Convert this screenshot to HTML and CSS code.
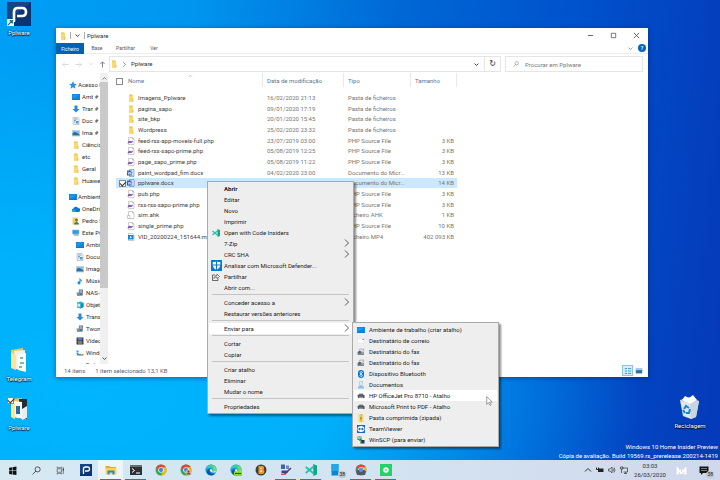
FILE: index.html
```
<!DOCTYPE html>
<html lang="pt">
<head>
<meta charset="utf-8">
<title>Pplware</title>
<link rel="stylesheet" href="styles.css">
</head>
<body>
<svg class="defs" aria-hidden="true">
  <symbol id="folder" viewBox="0 0 16 16"><path d="M4 1h6l2 2v12H4z" fill="#e9b93e"/><path d="M5 3h7v12H4V2z" fill="#fbd96c"/><path d="M10 10h3v5h-3z" fill="#f2c64c"/></symbol>
  <symbol id="php" viewBox="0 0 16 16"><path d="M3 1h8l3 3v11H3z" fill="#fff" stroke="#9b9b9b"/><path d="M11 1v3h3" fill="none" stroke="#9b9b9b"/><path d="M1 13c1-5 4-6 6-5s4 0 5-1c0 4-3 5-5 5s-4 0-6 1z" fill="#8557b0"/></symbol>
  <symbol id="file" viewBox="0 0 16 16"><path d="M3 1h8l3 3v11H3z" fill="#fff" stroke="#9b9b9b"/><path d="M11 1v3h3" fill="none" stroke="#9b9b9b"/><path d="M1 9h5v6H1z" fill="#fff" stroke="#999"/></symbol>
  <symbol id="docx" viewBox="0 0 16 16"><path d="M5 1h9v14H5z" fill="#fff" stroke="#2b66b8"/><path d="M8 4h5M8 7h5M8 10h5M8 13h5" stroke="#4a88d4"/><path d="M0 3h9v10H0z" fill="#1c5bb5"/><path d="M2 5l1.500 6L5 6l1.500 5L8 5" fill="none" stroke="#fff" stroke-width="1.200"/></symbol>
  <symbol id="video" viewBox="0 0 16 16"><path d="M3 1h8l3 3v11H3z" fill="#fff" stroke="#9b9b9b"/><path d="M2 4h11v9H2z" fill="#1686d9"/><path d="M6 6l4 2.500-4 2.500z" fill="#fff"/></symbol>
  <symbol id="star" viewBox="0 0 16 16"><path d="M8 0l2.300 5.300 5.700.5-4.300 3.800L13 15.500l-5-3-5 3 1.300-5.900L0 5.800l5.700-.5z" fill="#2694e6"/></symbol>
  <symbol id="desktop" viewBox="0 0 16 16"><path d="M0 2h16v12H0z" fill="#0a7cd0"/><path d="M1 3h14v9H1z" fill="#1b9bf0"/><path d="M1 12L15 3v9z" fill="#0d87de"/></symbol>
  <symbol id="down" viewBox="0 0 16 16"><path d="M5 1h6v7h4l-7 7-7-7h4z" fill="#2b88d8"/></symbol>
  <symbol id="docs" viewBox="0 0 16 16"><path d="M2 1h10l2 2v12H2z" fill="#eef4f8" stroke="#8ba0b2"/><path d="M4 4h7M4 7h4M4 10h3" stroke="#5b87ad" stroke-width="1.500"/><path d="M8 8h5v5H8z" fill="#4b9bd6"/></symbol>
  <symbol id="pics" viewBox="0 0 16 16"><path d="M0 3h16v11H0z" fill="#fff" stroke="#9aa9b5"/><path d="M1 4h14v5H1z" fill="#76c3ee"/><path d="M1 8l5-2 9 4v3H1z" fill="#2c6f9c"/></symbol>
  <symbol id="cloud" viewBox="0 0 16 16"><path d="M3 14a3.500 3.500 0 0 1 0-7 5 5 0 0 1 9-1 4 4 0 0 1 1 8z" fill="#0f77d0"/><path d="M0 11c1-4 6-4 8 3H3c-2 0-3-1-3-3z" fill="#2aa0ea"/></symbol>
  <symbol id="user" viewBox="0 0 16 16"><path d="M1 1h10v14H1z" fill="#efcf62"/><circle cx="9" cy="6" r="3" fill="#93673d"/><path d="M4 15c0-7 10-7 10 0z" fill="#3d8348"/></symbol>
  <symbol id="pc" viewBox="0 0 16 16"><path d="M1 2h13v8H1z" fill="#2d9fe8" stroke="#8db6d0"/><path d="M4 13h11l-3-2H3z" fill="#75828c"/></symbol>
  <symbol id="music" viewBox="0 0 16 16"><path d="M7 1c1 4 6 4 5 9-1-3-3-3-3-3v5a3 3 0 1 1-2-3z" fill="#188be2"/></symbol>
  <symbol id="nas" viewBox="0 0 16 16"><path d="M6 1h8l-1 12H5z" fill="#607180"/><path d="M7 3h5M7 5h5M7 7h5" stroke="#d8e2ea"/><path d="M1 7h6v7H2z" fill="#8193a0"/><circle cx="11" cy="11" r="2" fill="#2e84c5"/></symbol>
  <symbol id="cube" viewBox="0 0 16 16"><path d="M2 3l8-2 5 3v8l-6 3-7-2z" fill="#19b3d6"/><path d="M3 5l6 1v6l-6-1z" fill="#c6f4fb"/><path d="M9 6l6-2v8l-6 3z" fill="#0794bd"/></symbol>
  <symbol id="film" viewBox="0 0 16 16"><path d="M1 1h14v14H1z" fill="#29344d"/><path d="M4 2h8v5H4z" fill="#5779c5"/><path d="M4 8h8v6H4z" fill="#887b57"/><path d="M2 2v12M14 2v12" stroke="#d5d9e2" stroke-dasharray="1.500"/></symbol>
  <symbol id="drive" viewBox="0 0 16 16"><path d="M1 3h4v3H1zM1 7h4v3H1z" fill="#1ba4e8"/><path d="M2 10h13v3H2z" fill="#6d7881"/><path d="M10 11h3v1h-3z" fill="#d7edf2"/></symbol>
  <symbol id="pin" viewBox="0 0 16 16"><path d="M9 1l6 6-2 1-3 3-1 3-3-3-5 4 4-5-3-3 3-1 3-3z" fill="#69747c"/></symbol>
  <symbol id="magnifier" viewBox="0 0 16 16"><circle cx="10" cy="6" r="4.500" fill="none" stroke="currentColor" stroke-width="1.400"/><path d="M7 9l-6 6" stroke="currentColor" stroke-width="1.400"/></symbol>
  <symbol id="chevron" viewBox="0 0 16 16"><path d="M4 1l7 7-7 7" fill="none" stroke="currentColor" stroke-width="1.600"/></symbol>
  <symbol id="chevdown" viewBox="0 0 16 16"><path d="M2 5l6 6 6-6" fill="none" stroke="currentColor" stroke-width="3"/></symbol>
  <symbol id="chevup" viewBox="0 0 16 16"><path d="M2 11l6-6 6 6" fill="none" stroke="currentColor" stroke-width="2"/></symbol>
  <symbol id="arrow" viewBox="0 0 16 16"><path d="M15 8H2M7 3L2 8l5 5" fill="none" stroke="currentColor" stroke-width="1.600"/></symbol>
  <symbol id="vscode" viewBox="0 0 16 16"><path d="M11 0l5 2v12l-5 2z" fill="#13a58b"/><path d="M1 4l11 9M1 12L12 3" stroke="#24bfa5" stroke-width="2.400"/></symbol>
  <symbol id="defender" viewBox="0 0 20 20"><path d="M0 0h20v20H0z" fill="#0a78d4"/><path d="M10 2c2 2 5 2 7 2 0 7-1 11-7 14C4 15 3 11 3 4c2 0 5 0 7-2z" fill="#fff"/><path d="M10 2v16M3 9h14" stroke="#0a78d4" stroke-width="2"/></symbol>
  <symbol id="share" viewBox="0 0 16 16"><path d="M6 4H1v11h11v-4" fill="none" stroke="#333" stroke-width="1.400"/><path d="M4 11c0-4 3-6 6-6V2l5 5-5 4V8c-3 0-5 1-6 3z" fill="#fff" stroke="#333" stroke-width="1.200"/></symbol>
  <symbol id="mail" viewBox="0 0 16 16"><path d="M1 3h14v10H1z" fill="#fafafa" stroke="#ccd1d5" stroke-dasharray="2 1"/><path d="M11 4h3v2h-3z" fill="#5b9fd4"/></symbol>
  <symbol id="fax" viewBox="0 0 16 16"><path d="M5 2h9l-2 6H4z" fill="#dbe1e5" stroke="#87929a"/><path d="M1 8h13v6H1z" fill="#7c8993"/><path d="M3 6h5l-1 5H2z" fill="#4e5f6c"/><path d="M9 10h4" stroke="#fff"/></symbol>
  <symbol id="bluetooth" viewBox="0 0 16 16"><rect x="2" width="12" height="16" rx="6" fill="#0b77d5"/><path d="M5 5l6 6-3 3V2l3 3-6 6" fill="none" stroke="#fff" stroke-width="1.300"/></symbol>
  <symbol id="person" viewBox="0 0 16 16"><path d="M5 1h6v8H5z" fill="#d8eaf5" stroke="#91b8d0"/><path d="M2 15v-3l4-3h4l4 3v3z" fill="#83c3e9"/></symbol>
  <symbol id="printer" viewBox="0 0 16 16"><path d="M4 3h8v3H4z" fill="#899198"/><path d="M1 6l3-1h9l2 2v5H2z" fill="#4d555b"/><path d="M4 9h8v3H4z" fill="#8f989d"/></symbol>
  <symbol id="zip" viewBox="0 0 16 16"><path d="M3 0h10v16H3z" fill="#f8d768"/><path d="M8 0v16" stroke="#ae9340" stroke-width="2" stroke-dasharray="1"/><path d="M6 6h4v5H6z" fill="#b29b59"/></symbol>
  <symbol id="teamviewer" viewBox="0 0 16 16"><path d="M0 0h16v16H0z" fill="#1769c9"/><ellipse cx="8" cy="8" rx="7" ry="6" fill="#fff"/><path d="M2 8l4-3v2h4V5l4 3-4 3V9H6v2z" fill="#1769c9"/></symbol>
  <symbol id="winscp" viewBox="0 0 16 16"><path d="M1 1h8v7H1z" fill="#566c88"/><path d="M2 2h6v4H2z" fill="#9bc5df"/><path d="M7 8h8v7H7z" fill="#263643"/><path d="M5 6l5 7M5 10V6h4" stroke="#32b84b" stroke-width="2"/></symbol>
  <symbol id="pplogo" viewBox="0 0 24 24"><path d="M0 0h24v24H0z" fill="#0b3572"/><path d="M0 0h24L0 20z" fill="#174482"/><path d="M7 20V10q0-4 4-4h4q4 0 4 4t-4 4h-5" fill="none" stroke="#fff" stroke-width="2.600"/></symbol>
  <symbol id="chrome" viewBox="0 0 24 24"><circle cx="12" cy="12" r="11" fill="#34a853"/><path d="M2.500 6.500A11 11 0 0 1 21.500 6.500L12 7l-4.500 8z" fill="#ea4335"/><path d="M21.500 6.500A11 11 0 0 1 12 23l4.500-8.500L12 7z" fill="#fbbc04"/><circle cx="12" cy="12" r="5.500" fill="#fff"/><circle cx="12" cy="12" r="4.300" fill="#4285f4"/></symbol>
  <symbol id="edge" viewBox="0 0 24 24"><circle cx="12" cy="12" r="11" fill="#1189d4"/><path d="M1 11C2-2 22-1 23 10c0 5-5 6-9 4 3-3 0-6-4-6-5 0-8 3-9 3z" fill="#35c8bd"/><path d="M14 2c6 1 9 5 9 9 0 4-5 5-9 3 3-3 3-8 0-12z" fill="#6bdc67"/><path d="M9 10c-2 5 1 10 10 10-5 5-15 2-15-4 0-3 2-5 5-6z" fill="#0b52a7"/><path d="M11 10c-3 5 2 8 10 7l2-5c-1 3-6 4-9 2 1-2 0-4-3-4z" fill="#e5f4fc"/></symbol>
</svg>

<main class="desktop">
  <a class="shortcut app" href="#pplware"><svg class="logo"><use href="#pplogo"/></svg><svg class="link-arrow" viewBox="0 0 8 8"><path d="M0 0h8v8H0z" fill="#fff"/><path d="M1 7l5-5M3 2h3v3" stroke="#176bb0" stroke-width="1.500" fill="none"/></svg><span>Pplware</span></a>
  <a class="shortcut telegram" href="#telegram"><svg viewBox="0 0 20 24"><path d="M2 2l12-2v22L2 20z" fill="#e7c361"/><path d="M5 3l11-1v21l-9-2z" fill="#f1f2ed"/><path d="M9 7l8-2v19l-8-2z" fill="#fff"/><path d="M11 10h3M11 15h4M10 19h3" stroke="#76bdaa" stroke-width="2"/><path d="M2 4l5 3v15l-5-2z" fill="#ffe397"/></svg><span>Telegram</span></a>
  <a class="shortcut folder" href="#folder"><svg viewBox="0 0 20 24"><path d="M2 2l11-1v20L2 20z" fill="#e8c365"/><path d="M10 2h8v20h-8z" fill="#222d34"/><path d="M5 4l8 1v17l-8-2z" fill="#f5f7f9"/><path d="M7 9h4v8H7z" fill="#2368b4"/><path d="M13 12l5-3v12l-5 2z" fill="#e9edf0"/><path d="M2 4l4 3v15l-4-2z" fill="#ffe397"/></svg><span>Pplware</span></a>
  <input class="shortcut-check" type="checkbox" checked aria-label="Pplware">
  <a class="shortcut bin" href="#bin"><svg viewBox="0 0 22 24"><path d="M1 5l19 1-3 16-5 2-8-3z" fill="#dfe7ed"/><path d="M1 5l10-3 9 4-9 3z" fill="#b7c7d3"/><path d="M3 5l3-4 4 2 4-3 4 5-7 4z" fill="#fafcfd"/><path d="M11 9l9-3-3 16-5 2z" fill="#c9d5de"/><path d="M5 14l2-3 3 2M11 14l-1 4H7M6 18l-2-3" fill="none" stroke="#1687d3" stroke-width="2"/></svg><span>Reciclagem</span></a>

  <section class="window">
    <header class="titlebar">
      <svg class="icon"><use href="#folder"/></svg><i class="bar"></i>
      <svg class="tiny"><use href="#chevdown"/></svg><i class="bar"></i>
      <h1>Pplware</h1>
      <div class="controls">
        <button aria-label="Minimizar"><svg viewBox="0 0 8 8"><path d="M1 4h6" stroke="#555"/></svg></button>
        <button aria-label="Maximizar"><svg viewBox="0 0 8 8"><path d="M1.500 1.500h5v5h-5z" fill="none" stroke="#666"/></svg></button>
        <button aria-label="Fechar"><svg viewBox="0 0 8 8"><path d="M1 1l6 6M7 1L1 7" stroke="#555"/></svg></button>
      </div>
    </header>
    <div class="tabs">
      <button class="tab file">Ficheiro</button><button class="tab">Base</button><button class="tab share-tab">Partilhar</button><button class="tab">Ver</button>
      <div class="help"><svg class="tiny"><use href="#chevdown"/></svg><button aria-label="Ajuda">?</button></div>
    </div>
    <div class="navbar">
      <div class="arrows">
        <button aria-label="Retroceder"><svg><use href="#arrow"/></svg></button>
        <button aria-label="Avançar"><svg class="forward"><use href="#arrow"/></svg></button>
        <button aria-label="Recentes"><svg class="recent"><use href="#chevdown"/></svg></button>
        <button class="active" aria-label="Subir"><svg class="up"><use href="#arrow"/></svg></button>
      </div>
      <div class="address"><svg class="icon"><use href="#folder"/></svg><svg class="crumb"><use href="#chevron"/></svg><a href="#pplware">Pplware</a><svg class="crumb open"><use href="#chevdown"/></svg></div>
      <button class="refresh" aria-label="Atualizar">↻</button>
      <div class="search"><label for="q" aria-label="Procurar"><svg><use href="#magnifier"/></svg></label><input id="q" type="search" placeholder="Procurar em Pplware"></div>
    </div>
    <div class="content">
      <nav class="tree">
        <a class="root" href="#t"><svg><use href="#star"/></svg>Acesso Rápido</a>
        <a class="pinned" href="#t"><svg><use href="#desktop"/></svg><span>Ambiente</span><svg class="pin"><use href="#pin"/></svg></a>
        <a class="pinned" href="#t"><svg><use href="#down"/></svg><span>Transf</span><svg class="pin"><use href="#pin"/></svg></a>
        <a class="pinned" href="#t"><svg><use href="#docs"/></svg><span>Docum</span><svg class="pin"><use href="#pin"/></svg></a>
        <a class="pinned" href="#t"><svg><use href="#pics"/></svg><span>Imagens</span><svg class="pin"><use href="#pin"/></svg></a>
        <a href="#t"><svg><use href="#folder"/></svg>Ciência</a>
        <a href="#t"><svg><use href="#folder"/></svg>etc</a>
        <a href="#t"><svg><use href="#folder"/></svg>Geral</a>
        <a href="#t"><svg><use href="#folder"/></svg>Huawei</a>
        <a class="root second" href="#t"><svg><use href="#desktop"/></svg>Ambiente</a>
        <a href="#t"><svg><use href="#cloud"/></svg>OneDrive</a>
        <a href="#t"><svg><use href="#user"/></svg>Pedro S</a>
        <a href="#t"><svg><use href="#pc"/></svg>Este PC</a>
        <a class="child" href="#t"><svg><use href="#desktop"/></svg>Ambiente</a>
        <a class="child" href="#t"><svg><use href="#docs"/></svg>Documentos</a>
        <a class="child" href="#t"><svg><use href="#pics"/></svg>Imagens</a>
        <a class="child" href="#t"><svg><use href="#music"/></svg>Música</a>
        <a class="child" href="#t"><svg><use href="#nas"/></svg>NAS-PPL</a>
        <a class="child" href="#t"><svg><use href="#cube"/></svg>Objetos</a>
        <a class="child" href="#t"><svg><use href="#down"/></svg>Transf</a>
        <a class="child" href="#t"><svg><use href="#nas"/></svg>Twonky</a>
        <a class="child" href="#t"><svg><use href="#film"/></svg>Vídeos</a>
        <a class="child" href="#t"><svg><use href="#drive"/></svg>Windows</a>
        <a class="child" href="#t"><svg></svg>Data</a>
      </nav>
      <div class="scrollbar"><svg><use href="#chevup"/></svg><div class="thumb"></div><svg><use href="#chevdown"/></svg></div>
      <div class="listing">
        <table>
          <colgroup><col class="c-check"><col class="c-name"><col class="c-date"><col class="c-type"><col class="c-size"></colgroup>
          <thead><tr><th><input type="checkbox" aria-label="Selecionar tudo"></th><th class="sorted">Nome<svg><use href="#chevup"/></svg></th><th>Data de modificação</th><th>Tipo</th><th>Tamanho</th></tr></thead>
          <tbody>
            <tr><td></td><td><svg><use href="#folder"/></svg>Imagens_Pplware</td><td>16/02/2020 21:13</td><td>Pasta de ficheiros</td><td></td></tr>
            <tr><td></td><td><svg><use href="#folder"/></svg>pagina_sapo</td><td>09/01/2020 17:19</td><td>Pasta de ficheiros</td><td></td></tr>
            <tr><td></td><td><svg><use href="#folder"/></svg>site_bkp</td><td>20/01/2020 15:45</td><td>Pasta de ficheiros</td><td></td></tr>
            <tr><td></td><td><svg><use href="#folder"/></svg>Wordpress</td><td>25/02/2020 23:32</td><td>Pasta de ficheiros</td><td></td></tr>
            <tr><td></td><td><svg><use href="#php"/></svg>feed-rss-app-moveis-full.php</td><td>23/07/2019 03:00</td><td>PHP Source File</td><td>3 KB</td></tr>
            <tr><td></td><td><svg><use href="#php"/></svg>feed-rss-sapo-prime.php</td><td>05/08/2019 12:25</td><td>PHP Source File</td><td>3 KB</td></tr>
            <tr><td></td><td><svg><use href="#php"/></svg>page_sapo_prime.php</td><td>05/08/2019 11:22</td><td>PHP Source File</td><td>3 KB</td></tr>
            <tr><td></td><td><svg><use href="#docx"/></svg>paint_wordpad_fim.docx</td><td>04/02/2020 23:00</td><td>Documento do Micr...</td><td>13 KB</td></tr>
            <tr class="selected"><td><input type="checkbox" checked aria-label="pplware.docx"></td><td><svg><use href="#docx"/></svg>pplware.docx</td><td>25/03/2020 23:32</td><td>Documento do Micr...</td><td>14 KB</td></tr>
            <tr><td></td><td><svg><use href="#php"/></svg>pub.php</td><td></td><td>PHP Source File</td><td>3 KB</td></tr>
            <tr><td></td><td><svg><use href="#php"/></svg>rss-rss-sapo-prime.php</td><td></td><td>PHP Source File</td><td>3 KB</td></tr>
            <tr><td></td><td><svg><use href="#file"/></svg>sim.ahk</td><td></td><td>Ficheiro AHK</td><td>1 KB</td></tr>
            <tr><td></td><td><svg><use href="#php"/></svg>single_prime.php</td><td></td><td>PHP Source File</td><td>10 KB</td></tr>
            <tr><td></td><td><svg><use href="#video"/></svg>VID_20200224_151644.mp4</td><td></td><td>Ficheiro MP4</td><td>402 093 KB</td></tr>
          </tbody>
        </table>
      </div>
    </div>
    <footer class="status"><span>14 itens</span><span>1 item selecionado 13,1 KB</span>
      <div class="views"><button class="on" aria-label="Detalhes"><svg viewBox="0 0 10 10"><path d="M1 2h3M5 2h4M1 5h3M5 5h4M1 8h3M5 8h4" stroke="#3182ae"/></svg></button><button aria-label="Mosaicos"><svg viewBox="0 0 10 10"><path d="M1 2h8v6H1z" fill="#2b6ea5"/><path d="M1 2h8v2H1z" fill="#9bd1ed"/></svg></button></div>
    </footer>
  </section>

  <div class="menu context">
    <button><b>Abrir</b></button><button>Editar</button><button>Novo</button><button>Imprimir</button>
    <button><svg><use href="#vscode"/></svg>Open with Code Insiders</button>
    <button>7-Zip<svg class="more"><use href="#chevron"/></svg></button>
    <button>CRC SHA<svg class="more"><use href="#chevron"/></svg></button>
    <button><svg class="large"><use href="#defender"/></svg>Analisar com Microsoft Defender...</button>
    <button><svg><use href="#share"/></svg>Partilhar</button>
    <button>Abrir com...</button><hr>
    <button>Conceder acesso a<svg class="more"><use href="#chevron"/></svg></button><button>Restaurar versões anteriores</button><hr>
    <div class="parent">
      <button class="hot">Enviar para<svg class="more"><use href="#chevron"/></svg></button>
      <div class="menu submenu">
        <button><svg><use href="#desktop"/></svg>Ambiente de trabalho (criar atalho)</button>
        <button><svg><use href="#mail"/></svg>Destinatário de correio</button>
        <button><svg><use href="#fax"/></svg>Destinatário do fax</button>
        <button><svg><use href="#fax"/></svg>Destinatário do fax</button>
        <button><svg><use href="#bluetooth"/></svg>Dispositivo Bluetooth</button>
        <button><svg><use href="#person"/></svg>Documentos</button>
        <button class="hot"><svg><use href="#printer"/></svg>HP OfficeJet Pro 8710 - Atalho</button>
        <button><svg><use href="#printer"/></svg>Microsoft Print to PDF - Atalho</button>
        <button><svg><use href="#zip"/></svg>Pasta comprimida (zipada)</button>
        <button><svg><use href="#teamviewer"/></svg>TeamViewer</button>
        <button><svg><use href="#winscp"/></svg>WinSCP (para enviar)</button>
      </div>
    </div><hr>
    <button>Cortar</button><button>Copiar</button><hr>
    <button>Criar atalho</button><button>Eliminar</button><button>Mudar o nome</button><hr>
    <button>Propriedades</button>
  </div>
  <svg class="cursor" viewBox="0 0 12 18"><path d="M1 1v14l3-3 3 5 2-1-3-5h5z" fill="#fff" stroke="#555"/></svg>
  <p class="watermark">Windows 10 Home Insider Preview<br>Cópia de avaliação. Build 19569.rs_prerelease.200214-1419</p>
</main>

<footer class="taskbar">
  <div class="system">
    <button aria-label="Iniciar"><svg viewBox="0 0 16 16"><path d="M2 3l5-1v6H2zM8 2l7-1v7H8zM2 9h5v6l-5-1zM8 9h7v7l-7-1z" fill="#111"/></svg></button>
    <button aria-label="Procurar"><svg><use href="#magnifier"/></svg></button>
    <button aria-label="Vista de tarefas"><svg viewBox="0 0 16 16"><path d="M2 5h8v6H2zM2 1v2h8V1M2 15v-2h8v2M13 2v12" fill="none" stroke="#333"/><path d="M12 5h2v3h-2z" fill="#333"/></svg></button>
  </div>
  <div class="apps">
    <button aria-label="Pplware"><svg><use href="#pplogo"/></svg></button>
    <button class="current running" aria-label="Explorador"><svg viewBox="0 0 24 24"><path d="M1 4h8l2 2h11v4H1z" fill="#e6a928"/><path d="M1 8h22v13H1z" fill="#ffd65b"/><path d="M5 13h14v8h-4v-4H9v4H5z" fill="#2788cc"/></svg></button>
    <button class="running" aria-label="Terminal"><svg viewBox="0 0 24 24"><path d="M0 2h24v20H0z" fill="#2e3133"/><path d="M0 2h24v4H0z" fill="#686d70"/><path d="M4 9l5 4-5 4M12 18h8" fill="none" stroke="#fff" stroke-width="2"/></svg></button>
    <button aria-label="Chrome"><svg><use href="#chrome"/></svg></button>
    <button aria-label="Chrome perfil"><svg viewBox="0 0 24 24"><use href="#chrome"/><circle cx="17" cy="17" r="6" fill="#cbb6a5"/><circle cx="17" cy="15" r="2" fill="#714537"/><path d="M13 21c0-5 8-5 8 0z" fill="#9e3c42"/></svg></button>
    <button aria-label="Edge"><svg><use href="#edge"/></svg></button>
    <button aria-label="Edge Canary"><svg viewBox="0 0 24 24"><use href="#edge"/><path d="M8 15h16v9H8z" fill="#85d62e"/><path d="M10 19h12" stroke="#355e1a" stroke-width="2"/></svg></button>
    <button aria-label="Ferramenta"><svg viewBox="0 0 24 24"><circle cx="12" cy="12" r="11" fill="#383e40"/><path d="M7 4h8c4 1 4 5 2 7 3 2 2 9-2 9H7z" fill="#f6952d"/><path d="M11 8h3v2h-3zM11 13h3v3h-3z" fill="#fff"/></svg></button>
    <button class="running" aria-label="Editor"><svg viewBox="0 0 24 24"><path d="M2 1h18v18H2z" fill="#dfe8f5"/><path d="M2 1h8v9H2z" fill="#3c62ad"/><path d="M12 3h6v7h-6z" fill="#6f86b8"/><path d="M3 13h12v5H3z" fill="#2c4a8c"/><path d="M5 22L21 7l2 2L10 22z" fill="#54406e"/><path d="M2 19h8v3H2z" fill="#d65358"/></svg></button>
    <button class="running" aria-label="Code Insiders"><svg><use href="#vscode"/></svg></button>
    <button aria-label="Telefone"><svg viewBox="0 0 24 24"><path d="M3 0h14v23H3z" fill="#0786d2"/><path d="M3 0h14v14H3z" fill="#25a6e6"/></svg><span class="count">38</span></button>
    <button class="running" aria-label="Chrome janela"><svg viewBox="0 0 24 24"><use href="#chrome"/><path d="M2 14l7-3 3 5 4-5 6 3-2 8H4z" fill="#505966"/><circle cx="12" cy="12" r="4" fill="#5594e6"/></svg></button>
    <button class="running" aria-label="Captura"><svg viewBox="0 0 24 24"><path d="M0 0h24v24H0z" fill="#20d467"/><circle cx="12" cy="12" r="4" fill="#8be9b0" stroke="#fff" stroke-width="3"/></svg></button>
  </div>
  <div class="tray">
    <button aria-label="Mostrar ícones"><svg><use href="#chevup"/></svg></button>
    <button aria-label="Bateria"><svg viewBox="0 0 16 16"><path d="M4 5h11v7H4z" fill="#222"/><path d="M1 3v4h4V3" fill="none" stroke="#222" stroke-width="2"/></svg></button>
    <button aria-label="Volume"><svg viewBox="0 0 16 16"><path d="M1 6h3l4-4v12l-4-4H1zM10 5q2 3 0 6M12 3q4 5 0 10" fill="none" stroke="#333" stroke-width="1.300"/></svg></button>
    <button aria-label="Rede"><svg viewBox="0 0 16 16"><path d="M4 4h11v8H7M8 15h6M11 12v3M1 2h5v4H1zM3 6v8" fill="none" stroke="#333" stroke-width="1.400"/></svg></button>
  </div>
  <time class="clock">03:03<br>26/03/2020</time>
  <button class="brand" aria-label="Monitor"><svg viewBox="0 0 24 20"><path d="M1 1l5 4v14H1zM23 1l-5 4v14h5zM8 8h3v10H8zM13 8h3v10h-3zM6 8l6 6 6-6v4l-6 5-6-5z" fill="#fff"/></svg></button>
  <button class="notices" aria-label="Notificações"><svg viewBox="0 0 20 18"><path d="M1 1h18v13H8l-4 4v-4H1z" fill="#161616"/><path d="M4 5h12M4 9h12" stroke="#dce3ee"/></svg><span class="count">38</span></button>
</footer>
</body>
</html>
```
FILE: styles.css
```
* { box-sizing: border-box; }
body {
  margin: 0;
  height: 100vh;
  display: flex;
  flex-direction: column;
  overflow: hidden;
  font: 6px/8px Roboto, "Open Sans", sans-serif;
  color: #303030;
}
button { font: inherit; color: inherit; border: 0; padding: 0; background: none; display: flex; align-items: center; justify-content: center; }
a { color: inherit; text-decoration: none; }
svg { display: block; flex: none; width: 8px; height: 8px; }
.defs { position: absolute; width: 0; height: 0; }
input[type="checkbox"] {
  appearance: none;
  display: block;
  position: relative;
  width: 7px;
  height: 7px;
  margin: 0;
  border: 1px solid #8a8a8a;
  background: #fff;
}
input[type="checkbox"]:checked::after {
  content: "";
  position: absolute;
  left: 0;
  top: 0;
  width: 5px;
  height: 3px;
  border: solid #333;
  border-width: 0 0 1px 1px;
  transform: rotate(-45deg);
}

/* Desktop */
.desktop {
  flex: 1;
  min-height: 0;
  position: relative;
  background:
    radial-gradient(ellipse at 10% 85%, #00b4fd 0%, #00b0fb 28%, rgba(0, 160, 245, 0) 62%),
    linear-gradient(96deg, #009ff5 0%, #0096ef 25%, #0068d5 52%, #0052cd 75%, #0539b8 100%);
}
.shortcut {
  position: absolute;
  display: flex;
  flex-direction: column;
  align-items: center;
  gap: 3px;
  width: 36px;
  color: #fff;
  text-shadow: 0 0 2px #000, 0 1px 1px #000;
}
.shortcut > svg { width: 20px; height: 24px; }
.shortcut .logo { width: 24px; height: 24px; }
.app { left: 1px; top: 2px; }
.shortcut .link-arrow { position: absolute; left: 6px; top: 17px; width: 7px; height: 7px; }
.telegram { left: 1px; top: 348px; }
.folder { left: 1px; top: 397px; }
.shortcut-check.shortcut-check { position: absolute; left: 7px; top: 397px; }
.bin { right: 12px; bottom: 30px; }
.shortcut.bin svg { width: 22px; }
.watermark { position: absolute; right: 2px; bottom: 0; margin: 0; line-height: 9px; text-align: right; color: #fff; }

/* Explorer window */
.window {
  position: absolute;
  left: 56px;
  right: 72px;
  top: 28px;
  bottom: 83px;
  display: flex;
  flex-direction: column;
  background: #fff;
  box-shadow: 0 1px 5px rgba(0, 30, 80, .5);
}
.titlebar { height: 15px; display: flex; align-items: center; gap: 4px; padding-left: 3px; }
.titlebar .icon { margin-right: -1px; }
.titlebar h1 { margin: 0; font: inherit; margin-left: -2px; }
.bar { width: 1px; height: 7px; background: #aaa; }
.tiny { width: 5px; height: 5px; }
.controls { display: flex; margin-left: auto; height: 100%; }
.controls button { width: 23px; }
.controls svg { width: 7px; height: 7px; }
.tabs { height: 11px; display: flex; border-bottom: 1px solid #eee; color: #555; font-size: 5px; }
.tab { width: 26px; }
.tab.file { width: 28px; background: #0063b1; color: #fff; margin-bottom: -1px; }
.share-tab { width: 31px; }
.help { display: flex; align-items: center; gap: 5px; margin-left: auto; padding-right: 2px; color: #999; }
.help button { width: 8px; height: 8px; border-radius: 50%; background: #0067c0; color: #fff; font-weight: bold; }
.navbar { display: flex; height: 19px; padding: 2px 5px 1px 3px; }
.arrows { display: flex; width: 50px; color: #ccc; align-items: center; justify-content: space-between; padding: 0 3px; }
.arrows svg { width: 7px; height: 7px; }
.arrows .recent { width: 4px; height: 4px; }
.arrows .active { color: #555; }
.forward { transform: rotate(180deg); }
.up { transform: rotate(90deg); }
.address { flex: 1; display: flex; align-items: center; gap: 4px; border: 1px solid #e5e5e5; padding-right: 5px; }
.crumb { width: 5px; height: 5px; }
.open { margin-left: auto; }
.refresh { width: 16px; border: 1px solid #e5e5e5; border-left: 0; font: 8px/8px "DejaVu Sans", sans-serif; }
.search { width: 138px; margin-left: 4px; border: 1px solid #e5e5e5; display: flex; align-items: center; gap: 6px; padding-left: 7px; color: #777; }
.search svg { width: 6px; height: 6px; }
.search input { flex: 1; min-width: 0; height: 10px; padding: 0; border: 0; outline: 0; font: inherit; color: #666; }
.search input::placeholder { color: #777; }
.content { flex: 1; min-height: 0; display: flex; }
.tree { width: 44px; padding-top: 6px; overflow: hidden; }
.tree a { display: flex; align-items: center; gap: 2px; height: 12px; padding-left: 16px; white-space: nowrap; }
.tree .root { padding-left: 13px; gap: 1px; }
.tree .second { margin-top: 4px; }
.tree .child { padding-left: 20px; }
.tree .pinned { gap: 1px; }
.tree .pinned span { width: 11px; margin-left: 1px; overflow: hidden; }
.tree .pin { width: 5px; height: 6px; }
.scrollbar { width: 8px; display: flex; flex-direction: column; align-items: center; background: #f0f0f0; padding: 3px 0; color: #444; }
.scrollbar svg { width: 5px; height: 5px; }
.thumb { width: 100%; height: 206px; background: #c9c9c9; margin: 1px 0 auto; }
.listing { flex: 1; min-width: 0; padding-left: 8px; }
table { width: 341px; table-layout: fixed; border-collapse: collapse; color: #757575; }
.c-check { width: 10px; }
.c-name { width: 137px; }
.c-date { width: 81px; }
.c-type { width: 67px; }
.c-size { width: 46px; }
th, td { padding: 0 3px 0 4px; text-align: left; font-weight: normal; white-space: nowrap; }
th { height: 19px; padding-bottom: 3px; color: #60758c; background: linear-gradient(#e8e8e8, #e8e8e8) right 0 / 1px 14px no-repeat; }
th:first-child { background: none; }
th:first-child, td:first-child { padding: 0; }
th:first-child { padding-bottom: 3px; }
th.sorted { position: relative; padding-left: 2px; }
.sorted svg { position: absolute; left: 62px; top: 1px; width: 5px; height: 4px; color: #888; }
td { height: 11px; line-height: 8px; }
tr:nth-child(3n) td { height: 10px; }
td:nth-child(2) { padding-left: 1px; color: #3d3d3d; }
td svg { display: inline-block; vertical-align: top; margin-right: 3px; }
td:last-child { text-align: right; }
.selected td { background: #cce8ff; }
.selected input { margin-left: 3px; }
.status { height: 13px; display: flex; align-items: center; gap: 10px; padding: 0 4px 0 8px; color: #50647e; }
.views { display: flex; margin-left: auto; }
.views button { width: 11px; height: 11px; }
.views .on { background: #d5eef8; border: 1px solid #85c8e0; }

/* Menus */
.menu { position: absolute; padding: 1px; background: #eee; border: 1px solid #aaa; box-shadow: 2px 2px 2px rgba(0, 0, 0, .45); color: #222; }
.menu button { position: relative; width: 100%; height: 11px; justify-content: flex-start; padding-left: 15px; white-space: nowrap; }
.menu button > svg { position: absolute; left: 3px; top: 2px; }
.menu button > .large { left: 2px; top: 0; width: 11px; height: 11px; }
.menu button > .more { left: auto; right: 1px; top: 1px; color: #333; }
.menu hr { height: 1px; margin: 1px 3px 2px; border: 0; background: #c3c3c3; }
.menu .hot { background: #fff; }
.context { left: 207px; top: 181px; width: 147px; }
.parent { position: relative; }
.submenu { left: 143px; top: -1px; width: 147px; }
.cursor { position: absolute; left: 486px; top: 396px; width: 7px; height: 10px; }

/* Taskbar */
.taskbar { height: 20px; display: flex; background: linear-gradient(90deg, #d5e9f3, #d3e2f0 60%, #d0d8ec); }
.system { display: flex; }
.system button { width: 24px; }
.system svg { width: 9px; height: 9px; }
.apps { display: flex; padding-left: 1px; }
.apps button { width: 25px; position: relative; }
.apps svg { width: 12px; height: 12px; }
.apps .current { background: #edf5fa; }
.apps .running::after { content: ""; position: absolute; left: 2px; right: 2px; bottom: 0; height: 1px; background: #1680d0; }
.tray { display: flex; margin-left: auto; }
.tray button { width: 12px; }
.tray svg { width: 8px; height: 8px; }
.clock { width: 40px; text-align: center; line-height: 9px; padding-top: 1px; }
.brand { width: 22px; }
.brand svg { width: 11px; height: 9px; }
.notices { position: relative; width: 28px; padding-right: 4px; }
.notices svg { width: 10px; height: 9px; }
.count { position: absolute; right: 2px; bottom: 2px; padding: 0 1px; border-radius: 4px; background: #bfc8cf; color: #222; font-size: 5px; line-height: 7px; }
.notices .count { right: 6px; }
```
